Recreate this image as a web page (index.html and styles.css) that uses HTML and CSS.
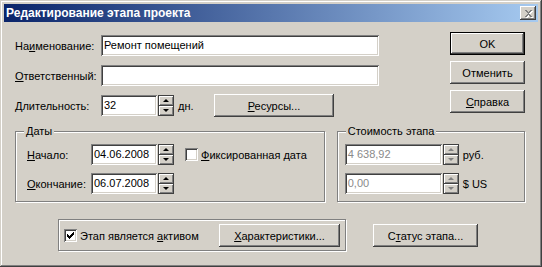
FILE: index.html
```html
<!DOCTYPE html>
<html lang="ru">

<head>
    <meta charset="UTF-8">
    <title>Редактирование этапа проекта</title>
    <link rel="stylesheet" href="styles.css">
</head>

<body>
    <div class="window">
        <div class="titlebar">
            <span class="title">Редактирование этапа проекта</span>
            <span class="close">
                <svg width="16" height="14" viewBox="0 0 16 14" shape-rendering="crispEdges">
                    <path d="M5 4h2v1h1v1h1v-1h1v-1h2v1h-1v1h-1v1h-1v1h1v1h1v1h1v1h-2v-1h-1v-1h-1v1h-1v1h-2v-1h1v-1h1v-1h1v-1h-1v-1h-1v-1h-1z" fill="#fff" transform="translate(1 1)"/>
                    <path d="M5 4h2v1h1v1h1v-1h1v-1h2v1h-1v1h-1v1h-1v1h1v1h1v1h1v1h-2v-1h-1v-1h-1v1h-1v1h-2v-1h1v-1h1v-1h1v-1h-1v-1h-1v-1h-1z" fill="#808080"/>
                </svg>
            </span>
        </div>

        <div class="content">
            <div class="top">
                <div class="fields">
                    <div class="row">
                        <span class="label">На<u>и</u>менование:</span>
                        <div class="edit wide">Ремонт помещений</div>
                    </div>
                    <div class="row">
                        <span class="label"><u>О</u>тветственный:</span>
                        <div class="edit wide"></div>
                    </div>
                    <div class="row">
                        <span class="label"><u>Д</u>лительность:</span>
                        <div class="edit short">32</div>
                        <div class="spin">
                            <span class="spin-btn"><i class="arrow up"></i></span>
                            <span class="spin-btn"><i class="arrow down"></i></span>
                        </div>
                        <span class="unit">дн.</span>
                        <button class="btn resources"><u>Р</u>есурсы...</button>
                    </div>
                </div>

                <div class="actions">
                    <button class="btn default">OK</button>
                    <button class="btn">Отменить</button>
                    <button class="btn"><u>С</u>правка</button>
                </div>
            </div>

            <div class="groups">
                <div class="group dates">
                    <span class="group-title">Даты</span>
                    <div class="row">
                        <span class="label date-label"><u>Н</u>ачало:</span>
                        <div class="edit date">04.06.2008</div>
                        <div class="spin">
                            <span class="spin-btn"><i class="arrow up"></i></span>
                            <span class="spin-btn"><i class="arrow down"></i></span>
                        </div>
                        <span class="check-wrap">
                            <span class="check"></span>
                            <span><u>Ф</u>иксированная дата</span>
                        </span>
                    </div>
                    <div class="row">
                        <span class="label date-label"><u>О</u>кончание:</span>
                        <div class="edit date">06.07.2008</div>
                        <div class="spin">
                            <span class="spin-btn"><i class="arrow up"></i></span>
                            <span class="spin-btn"><i class="arrow down"></i></span>
                        </div>
                    </div>
                </div>

                <div class="group cost">
                    <span class="group-title">Стоимость этапа</span>
                    <div class="row">
                        <div class="edit money disabled">4 638,92</div>
                        <div class="spin disabled">
                            <span class="spin-btn"><i class="arrow up"></i></span>
                            <span class="spin-btn"><i class="arrow down"></i></span>
                        </div>
                        <span class="unit">руб.</span>
                    </div>
                    <div class="row">
                        <div class="edit money disabled">0,00</div>
                        <div class="spin disabled">
                            <span class="spin-btn"><i class="arrow up"></i></span>
                            <span class="spin-btn"><i class="arrow down"></i></span>
                        </div>
                        <span class="unit">$ US</span>
                    </div>
                </div>
            </div>

            <div class="footer">
                <div class="group asset">
                    <span class="check-wrap">
                        <span class="check checked">
                            <svg width="9" height="9" viewBox="0 0 9 9" shape-rendering="crispEdges">
                                <path d="M1 3h1v1h1v1h1v-1h1v-1h1v-1h1v-1h1v3h-1v1h-1v1h-1v1h-1v1h-1v-1h-1v-1h-1z" fill="#000"/>
                            </svg>
                        </span>
                        <span>Этап является <u>а</u>ктивом</span>
                    </span>
                    <button class="btn features"><u>Х</u>арактеристики...</button>
                </div>
                <button class="btn status">С<u>т</u>атус этапа...</button>
            </div>
        </div>
    </div>
</body>

</html>
```

FILE: styles.css
```css
body {
    margin: 0;
    background: #d4d0c8;
}

.window {
    width: 542px;
    height: 267px;
    box-sizing: border-box;
    padding: 4px;
    background: #d4d0c8;
    box-shadow: inset -1px -1px #404040, inset 1px 1px #d4d0c8, inset -2px -2px #808080, inset 2px 2px #fff;
    font-family: "Liberation Sans", Arial, sans-serif;
    font-size: 11px;
    color: #000;
}

.titlebar {
    height: 18px;
    display: flex;
    align-items: center;
    padding: 0 2px;
    background: linear-gradient(to right, #0a246a, #a6caf0);
    color: #fff;
    font-weight: bold;
    font-size: 12px;
}

.close {
    margin-left: auto;
    width: 16px;
    height: 14px;
    background: #d4d0c8;
    box-shadow: inset -1px -1px #404040, inset 1px 1px #fff, inset -2px -2px #808080;
}

.close svg {
    display: block;
}

.content {
    padding: 10px 13px 0 11px;
}

.top {
    display: flex;
    justify-content: space-between;
}

.fields {
    width: 364px;
    margin-top: 3px;
    display: flex;
    flex-direction: column;
    gap: 9px;
}

.row {
    display: flex;
    align-items: center;
    height: 21px;
}

.label {
    width: 86px;
    flex: none;
}

.edit {
    box-sizing: border-box;
    height: 21px;
    line-height: 21px;
    padding: 0 3px;
    background: #fff;
    box-shadow: inset 1px 1px #808080, inset -1px -1px #fff, inset 2px 2px #404040, inset -2px -2px #d4d0c8;
    white-space: nowrap;
}

.edit.wide {
    width: 278px;
}

.edit.short {
    width: 56px;
}

.edit.disabled {
    color: #8a8a8a;
}

.spin {
    width: 16px;
    height: 21px;
    margin-left: 1px;
    box-sizing: border-box;
    border: 1px solid #404040;
    display: flex;
    flex-direction: column;
    background: #404040;
    gap: 1px;
}

.spin-btn {
    flex: 1;
    display: flex;
    align-items: center;
    justify-content: center;
    background: #d4d0c8;
    box-shadow: inset 1px 1px #fff, inset -1px -1px #808080;
}

.arrow {
    width: 0;
    height: 0;
    border-left: 3px solid transparent;
    border-right: 3px solid transparent;
}

.arrow.up {
    border-bottom: 3px solid #000;
}

.arrow.down {
    border-top: 3px solid #000;
}

.spin.disabled .arrow.up {
    border-bottom-color: #808080;
}

.spin.disabled .arrow.down {
    border-top-color: #808080;
}

.unit {
    margin-left: 4px;
}

.btn {
    font: inherit;
    color: #000;
    background: #d4d0c8;
    border: 0;
    padding: 0;
    height: 23px;
    box-shadow: inset -1px -1px #404040, inset 1px 1px #fff, inset -2px -2px #808080, inset 2px 2px #d4d0c8;
}

.btn.default {
    box-shadow: inset 0 0 0 1px #000, inset -2px -2px #404040, inset 2px 2px #fff, inset -3px -3px #808080;
}

.resources {
    width: 120px;
    margin-left: auto;
    margin-right: 45px;
}

.actions {
    display: flex;
    flex-direction: column;
    gap: 6px;
}

.actions .btn {
    width: 75px;
}

.groups {
    display: flex;
    gap: 12px;
    margin-top: 15px;
}

.group {
    position: relative;
    box-sizing: border-box;
    border: 1px solid #808080;
    box-shadow: inset 1px 1px #fff, 1px 1px #fff;
}

.group-title {
    position: absolute;
    top: -7px;
    left: 8px;
    padding: 0 2px;
    background: #d4d0c8;
    line-height: 13px;
}

.dates {
    width: 311px;
    height: 71px;
    padding: 12px 0 0 11px;
    display: flex;
    flex-direction: column;
    gap: 8px;
}

.date-label {
    width: 64px;
}

.edit.date {
    width: 66px;
}

.check-wrap {
    display: flex;
    align-items: center;
    gap: 3px;
}

.dates .check-wrap {
    margin-left: 11px;
}

.check {
    width: 13px;
    height: 13px;
    box-sizing: border-box;
    background: #fff;
    box-shadow: inset 1px 1px #808080, inset -1px -1px #fff, inset 2px 2px #404040, inset -2px -2px #d4d0c8;
    display: flex;
    align-items: center;
    justify-content: center;
}

.cost {
    width: 189px;
    height: 71px;
    padding: 12px 0 0 7px;
    display: flex;
    flex-direction: column;
    gap: 8px;
}

.edit.money {
    width: 97px;
}

.footer {
    display: flex;
    align-items: flex-start;
    margin-top: 17px;
}

.asset {
    width: 288px;
    height: 32px;
    margin-left: 43px;
    padding: 4px 5px 0 5px;
    display: flex;
    justify-content: space-between;
    align-items: flex-start;
}

.asset .check-wrap {
    height: 23px;
}

.features {
    width: 121px;
}

.status {
    width: 105px;
    margin-left: 27px;
    margin-top: 5px;
}
```
